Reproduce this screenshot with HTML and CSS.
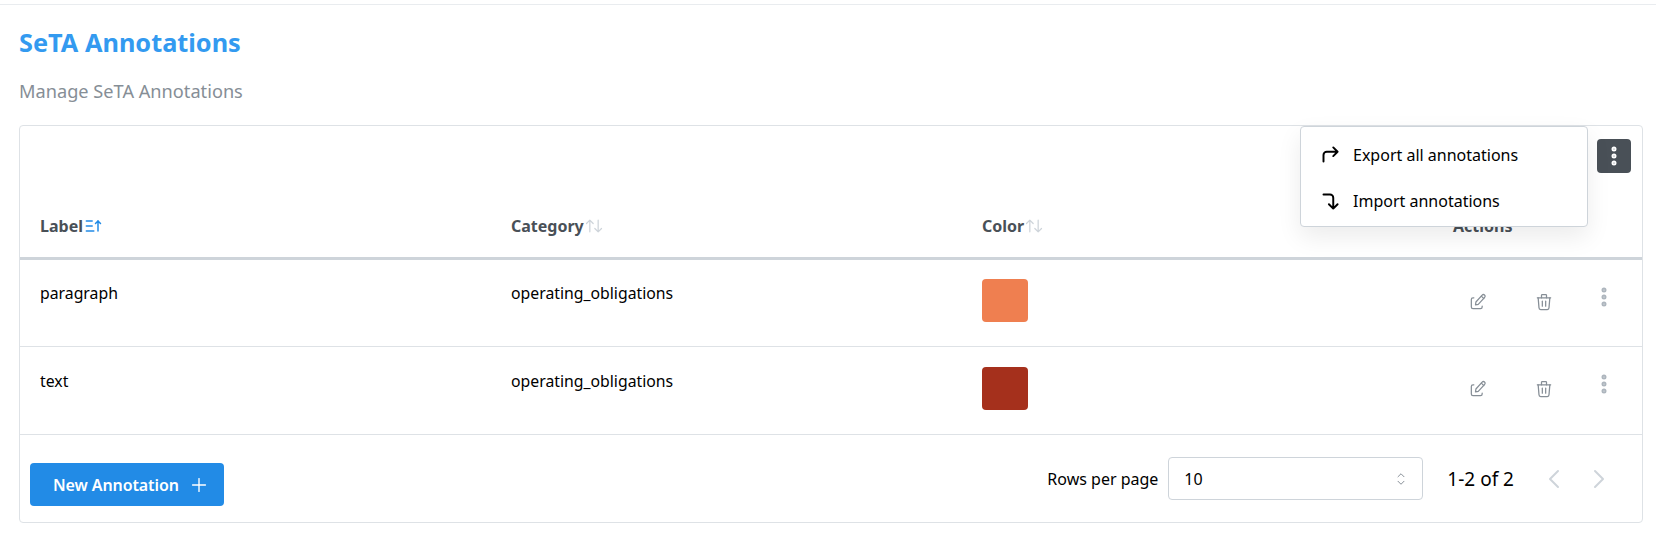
FILE: index.html
```html
<!DOCTYPE html>
<html lang="en">
<head>
    <meta charset="UTF-8">
    <title>SeTA Annotations</title>
    <link rel="stylesheet" href="styles.css">
</head>
<body>
    <svg class="icon-defs" width="0" height="0">
        <defs>
            <symbol id="i-sort" viewBox="0 0 24 24"><path d="M3 9l4 -4l4 4m-4 -4v14"/><path d="M21 15l-4 4l-4 -4m4 4v-14"/></symbol>
            <symbol id="i-edit" viewBox="0 0 24 24"><path d="M7 7h-1a2 2 0 0 0 -2 2v9a2 2 0 0 0 2 2h9a2 2 0 0 0 2 -2v-1"/><path d="M20 6.5a2 2 0 0 0 -3 -2.700l-7.500 8.200l-0.500 3.500l3.300 -0.700z"/><path d="M16 5l3 3"/></symbol>
            <symbol id="i-trash" viewBox="0 0 24 24"><path d="M4 7h16"/><path d="M10 11v6"/><path d="M14 11v6"/><path d="M5 7l1 12a2 2 0 0 0 2 2h8a2 2 0 0 0 2 -2l1 -12"/><path d="M9 7v-3a1 1 0 0 1 1 -1h4a1 1 0 0 1 1 1v3"/></symbol>
            <symbol id="i-dots" viewBox="0 0 24 24"><circle cx="12" cy="5" r="1"/><circle cx="12" cy="12" r="1"/><circle cx="12" cy="19" r="1"/></symbol>
        </defs>
    </svg>

    <div class="topline"></div>

    <main class="page">
        <h1>SeTA Annotations</h1>
        <p class="subtitle">Manage SeTA Annotations</p>

        <section class="card">
            <div class="toolbar">
                <button class="menu-btn">
                    <svg class="icon" width="24" height="24"><use href="#i-dots"/></svg>
                </button>
            </div>

            <div class="dropdown">
                <div class="dropdown-item">
                    <svg class="icon" viewBox="0 0 24 24" width="26" height="26"><path d="M6 18v-6a3 3 0 0 1 3 -3h10l-4 -4m0 8l4 -4"/></svg>
                    Export all annotations
                </div>
                <div class="dropdown-item">
                    <svg class="icon" viewBox="0 0 24 24" width="26" height="26"><path d="M6 6h6a3 3 0 0 1 3 3v10l-4 -4m8 0l-4 4"/></svg>
                    Import annotations
                </div>
            </div>

            <table>
                <thead>
                    <tr>
                        <th><span class="th-inner">Label
                            <svg class="icon sort-active" viewBox="0 0 24 24" width="20" height="20"><path d="M4 6h7"/><path d="M4 12h7"/><path d="M4 18h9"/><path d="M15 9l3 -3l3 3"/><path d="M18 6v12"/></svg>
                        </span></th>
                        <th><span class="th-inner">Category
                            <svg class="icon sort-idle" width="20" height="20"><use href="#i-sort"/></svg>
                        </span></th>
                        <th><span class="th-inner">Color
                            <svg class="icon sort-idle" width="20" height="20"><use href="#i-sort"/></svg>
                        </span></th>
                        <th>Actions</th>
                    </tr>
                </thead>
                <tbody>
                    <tr>
                        <td><div class="cell-text">paragraph</div></td>
                        <td><div class="cell-text">operating_obligations</div></td>
                        <td><div class="swatch swatch-orange"></div></td>
                        <td>
                            <div class="actions">
                                <svg class="icon action-icon" width="20" height="20"><use href="#i-edit"/></svg>
                                <svg class="icon action-icon" width="20" height="20"><use href="#i-trash"/></svg>
                                <svg class="icon dots" width="24" height="24"><use href="#i-dots"/></svg>
                            </div>
                        </td>
                    </tr>
                    <tr>
                        <td><div class="cell-text">text</div></td>
                        <td><div class="cell-text">operating_obligations</div></td>
                        <td><div class="swatch swatch-red"></div></td>
                        <td>
                            <div class="actions">
                                <svg class="icon action-icon" width="20" height="20"><use href="#i-edit"/></svg>
                                <svg class="icon action-icon" width="20" height="20"><use href="#i-trash"/></svg>
                                <svg class="icon dots" width="24" height="24"><use href="#i-dots"/></svg>
                            </div>
                        </td>
                    </tr>
                </tbody>
            </table>

            <div class="card-footer">
                <button class="btn-new">New Annotation
                    <svg class="icon" viewBox="0 0 24 24" width="22" height="22"><path d="M12 5v14"/><path d="M5 12h14"/></svg>
                </button>
                <div class="pager">
                    <span class="rows-label">Rows per page</span>
                    <div class="select">
                        <span>10</span>
                        <svg class="icon" viewBox="0 0 24 24" width="18" height="18"><path d="M8 9l4 -4l4 4"/><path d="M16 15l-4 4l-4 -4"/></svg>
                    </div>
                    <span class="page-info">1-2 of 2</span>
                    <svg class="icon chevron" viewBox="0 0 24 24" width="32" height="32"><path d="M15 6l-6 6l6 6"/></svg>
                    <svg class="icon chevron" viewBox="0 0 24 24" width="32" height="32"><path d="M9 6l6 6l-6 6"/></svg>
                </div>
            </div>
        </section>
    </main>
</body>
</html>
```

FILE: styles.css
```css
* {
    margin: 0;
    padding: 0;
    box-sizing: border-box;
}

body {
    font-family: 'Noto Sans', sans-serif;
    font-size: 16px;
    background-color: #fff;
    color: #000;
    height: 534px;
    overflow: hidden;
}

.icon-defs {
    position: absolute;
}

.icon {
    fill: none;
    stroke: currentColor;
    stroke-width: 1.5;
    stroke-linecap: round;
    stroke-linejoin: round;
    flex-shrink: 0;
}

.topline {
    height: 5px;
    border-bottom: 1px solid #e9ecef;
}

.page {
    padding: 0 14px 0 19px;
}

h1 {
    font-size: 25.3px;
    line-height: 32px;
    font-weight: 700;
    color: #339af0;
    margin-top: 21px;
}

.subtitle {
    font-size: 18.2px;
    line-height: 24px;
    color: #868e96;
    margin-top: 21px;
}

.card {
    position: relative;
    margin-top: 22px;
    border: 1px solid #dee2e6;
    border-radius: 4px;
    width: 1624px;
    height: 398px;
}

.toolbar {
    height: 72px;
    display: flex;
    justify-content: flex-end;
    padding: 13px 11px 0 0;
}

.menu-btn {
    width: 34px;
    height: 34px;
    border: none;
    border-radius: 4px;
    background-color: #495057;
    color: #fff;
    display: flex;
    align-items: center;
    justify-content: center;
}

.menu-btn .icon {
    stroke-width: 3;
}

.dropdown {
    position: absolute;
    top: 0;
    left: 1280px;
    width: 288px;
    height: 101px;
    background-color: #fff;
    border: 1px solid #ced4da;
    border-radius: 4px;
    box-shadow: 0 10px 25px rgba(0, 0, 0, 0.08);
    padding: 5px 0 3px;
    z-index: 10;
}

.dropdown-item {
    height: 46px;
    display: flex;
    align-items: center;
    gap: 10px;
    padding-left: 16px;
    color: #000;
}

.dropdown-item .icon {
    stroke-width: 1.8;
}

table {
    width: 100%;
    border-collapse: separate;
    border-spacing: 0;
    table-layout: fixed;
}

th {
    width: 471px;
    height: 62px;
    padding: 0 20px 4px;
    text-align: left;
    vertical-align: middle;
    font-size: 16px;
    font-weight: 700;
    color: #495057;
    border-bottom: 3px solid #ced4da;
}

th:last-child {
    width: auto;
}

.th-inner {
    display: flex;
    align-items: center;
}

.sort-active {
    color: #228be6;
    stroke-width: 1.8;
}

.sort-idle {
    color: #ced4da;
}

td {
    height: 88px;
    padding: 20px 20px 0;
    vertical-align: top;
    border-bottom: 1px solid #dee2e6;
}

tbody tr:first-child td {
    height: 87px;
}

.cell-text {
    font-size: 15.8px;
    line-height: 24px;
    margin-top: 2px;
}

tbody tr:first-child .cell-text {
    margin-top: 1px;
}

.swatch {
    width: 46px;
    height: 43px;
    border-radius: 4px;
}

tbody tr:first-child .swatch {
    margin-top: -1px;
}

.swatch-orange {
    background-color: #ef7f50;
}

.swatch-red {
    background-color: #a5301c;
}

.actions {
    display: flex;
    align-items: flex-start;
    color: #868e96;
    margin: 5px 0 0 15px;
}

.action-icon {
    margin: 7px 46px 0 0;
}

.action-icon + .dots {
    margin-left: -8px;
}

.actions .dots {
    color: #adb5bd;
    stroke-width: 3;
}

.card-footer {
    display: flex;
    align-items: center;
    justify-content: space-between;
    padding: 0 27px 0 10px;
    height: 87px;
}

.btn-new {
    width: 194px;
    height: 43px;
    margin-top: 12px;
    padding: 1px 14px 0 23px;
    border: none;
    border-radius: 4px;
    background-color: #228be6;
    color: #fff;
    font-family: inherit;
    font-size: 16px;
    font-weight: 600;
    letter-spacing: -0.1px;
    display: flex;
    align-items: center;
    justify-content: space-between;
}

.pager {
    display: flex;
    align-items: center;
}

.rows-label {
    margin-right: 10px;
}

.select {
    width: 255px;
    height: 43px;
    border: 1px solid #ced4da;
    border-radius: 4px;
    padding: 0 12px 0 15px;
    display: flex;
    align-items: center;
    justify-content: space-between;
}

.select .icon {
    color: #868e96;
    stroke-width: 1.3;
}

.page-info {
    margin: 0 24px 0 24px;
    font-size: 19px;
}

.chevron {
    color: #ced4da;
    margin-right: 13px;
}

.chevron:last-child {
    margin-right: 0;
}
```
